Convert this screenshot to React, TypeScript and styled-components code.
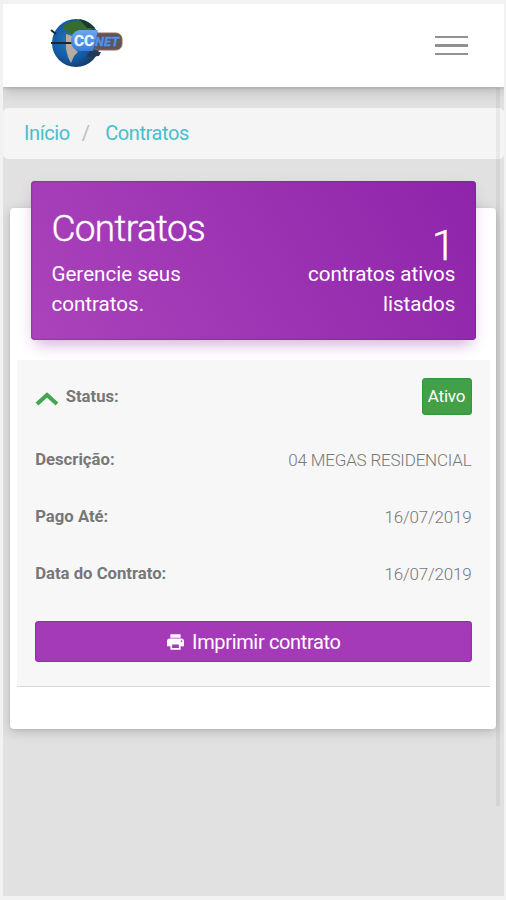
import React from "react";
import styled, { createGlobalStyle } from "styled-components";

const GlobalStyle = createGlobalStyle`
  * { box-sizing: border-box; }
  body { margin: 0; background: #f2f2f2; font-family: Roboto, "Liberation Sans", sans-serif; font-weight: 300; }
  h1, p { margin: 0; font-weight: inherit; }
`;

const Page = styled.div`
  height: 900px;
  padding: 4px 2px 4px 3px;
`;

const Screen = styled.main`
  position: relative;
  height: 892px;
  overflow: hidden;
  background: #e1e1e1;
`;

const Header = styled.header`
  position: relative;
  display: flex;
  align-items: center;
  justify-content: space-between;
  height: 83px;
  padding: 0 36px 0 45px;
  background: #fff;
  box-shadow: 0 3px 14px rgba(0, 0, 0, 0.22), 0 1px 3px rgba(0, 0, 0, 0.15);
`;

const Logo = styled.svg`
  width: 78px;
  height: 56px;
  margin-bottom: 4px;
`;

const MenuButton = styled.button`
  display: flex;
  flex-direction: column;
  gap: 6px;
  padding: 0;
  border: 0;
  background: none;
`;

const MenuLine = styled.span`
  width: 33px;
  height: 2.5px;
  background: #919191;
`;

const Breadcrumb = styled.nav`
  display: flex;
  align-items: center;
  height: 51px;
  margin-top: 21px;
  padding: 0 0 2px 21px;
  border-radius: 5px;
  background: #f5f5f5;
  color: #45bfce;
  font-size: 20px;
  font-weight: 400;
  letter-spacing: -0.4px;
`;

const Separator = styled.span`
  margin: 0 15.5px 0 12px;
  color: #bdbdbd;
`;

const Card = styled.section`
  height: 521px;
  margin: 49px 8px 0 7px;
  padding: 0 6px 0 7px;
  border-radius: 4px;
  background: #fff;
  box-shadow: 0 3px 12px rgba(0, 0, 0, 0.18), 0 1px 3px rgba(0, 0, 0, 0.08);
`;

const CardHeader = styled.header`
  position: relative;
  top: -27px;
  display: flex;
  justify-content: space-between;
  height: 159px;
  margin: 0 14px -7px 14.4px;
  padding: 0 20.5px 0 20px;
  border-radius: 4px;
  background: linear-gradient(60deg, #ab43bb, #8e24aa);
  box-shadow: inset 0 0 2px #8000a0, 0 5px 20px rgba(0, 0, 0, 0.04), 0 9px 14px -5px rgba(156, 39, 176, 0.35);
  color: #fff;
  font-size: 20.6px;
  font-weight: 400;
  line-height: 29.5px;
`;

const Intro = styled.div`
  width: 170px;
  padding-top: 25px;
`;

const Title = styled.h1`
  margin-bottom: 9px;
  font-size: 37px;
  font-weight: 300;
  line-height: 45px;
  letter-spacing: -0.65px;
  -webkit-text-stroke: 0.4px currentColor;
`;

const Summary = styled.div`
  width: 160px;
  padding-top: 47px;
  text-align: right;
`;

const Count = styled.p`
  height: 32px;
  font-size: 43px;
  font-weight: 300;
  line-height: 35px;
  -webkit-text-stroke: 0.4px currentColor;
`;

const Details = styled.div`
  height: 327px;
  padding: 7px 18.5px 0 18.2px;
  border-bottom: 1px solid #d8d8d8;
  background: #f7f7f7;
`;

const Row = styled.div`
  display: flex;
  align-items: center;
  justify-content: space-between;
  height: 57px;
  color: #777;
  font-size: 17px;
  letter-spacing: -0.2px;
`;

const StatusRow = styled(Row)`
  height: 58px;
  margin-bottom: 6px;
`;

const Label = styled.span`
  display: flex;
  align-items: center;
  font-size: 16.7px;
  font-weight: 700;
  letter-spacing: 0;
`;

const Chevron = styled.svg`
  width: 24px;
  height: 16px;
  margin: 4px 6.5px 0 0;
`;

const Badge = styled.span`
  width: 50px;
  height: 37px;
  border-radius: 4px;
  background: #43a047;
  box-shadow: inset 0 0 2px #008b10;
  color: #fff;
  font-size: 17px;
  font-weight: 400;
  line-height: 36px;
  text-align: center;
`;

const PrintButton = styled.button`
  display: flex;
  align-items: center;
  justify-content: center;
  gap: 8px;
  width: 100%;
  height: 41px;
  margin-top: 19px;
  padding: 0 0 0 1px;
  border: 0;
  border-radius: 4px;
  background: #a53ab9;
  box-shadow: inset 0 0 2px #8200a0;
  color: #fff;
  font: 400 20px Roboto, sans-serif;
  letter-spacing: -0.35px;
`;

const PrintIcon = styled.svg`
  width: 17px;
  height: 16px;
`;

const Scrollbar = styled.div`
  position: absolute;
  top: 84px;
  right: 4px;
  width: 4px;
  height: 718px;
  background: rgba(0, 0, 0, 0.05);
`;

const BrandLogo = () => (
  <Logo viewBox="48 15 78 56" role="img" aria-label="CCNET">
    <defs>
      <radialGradient id="ocean" cx="0.4" cy="0.45" r="0.6">
        <stop offset="0" stopColor="#287db2" />
        <stop offset="0.65" stopColor="#1259a6" />
        <stop offset="1" stopColor="#163b60" />
      </radialGradient>
      <linearGradient id="pill" x2="0" y2="1">
        <stop stopColor="#6aa6ee" />
        <stop offset="1" stopColor="#3c7cdc" />
      </linearGradient>
    </defs>
    <circle cx="76" cy="42" r="24" fill="url(#ocean)" />
    <path d="M64 24Q75 16 87 22L92 28 84 31 79 29 74 34 69 32 63 27Z" fill="#376b30" />
    <path d="M79 18Q88 19 95 27L87 27Z" fill="#183b2b" />
    <path d="M66 33L72 35 73 46 78 51 74 55 71 62 68 56 66 48Z" fill="#b8aca0" />
    <path d="M51 29L56 33M51 42H73" stroke="#142935" strokeWidth="2" />
    <path d="M90 50L101 51 99 55 86 56Z" fill="#26394f" />
    <rect x="92" y="32" width="30" height="17" rx="6" fill="#5d5558" stroke="#996755" strokeWidth="1" />
    <path d="M79 29H98L93 50H79Q71 48 71 40Q71 31 79 29Z" fill="url(#pill)" />
    <text x="74" y="45" fill="#e7f6ff" stroke="#e7f6ff" strokeWidth="0.3" fontFamily="Roboto" fontWeight="700" fontSize="14" textLength="20" lengthAdjust="spacingAndGlyphs">CC</text>
    <text x="95" y="45" fill="#4f91ed" stroke="#4f91ed" strokeWidth="0.3" fontFamily="Roboto" fontStyle="italic" fontWeight="700" fontSize="13" textLength="24" lengthAdjust="spacingAndGlyphs">NET</text>
  </Logo>
);

const details = [
  { label: "Descrição:", value: "04 MEGAS RESIDENCIAL" },
  { label: "Pago Até:", value: "16/07/2019" },
  { label: "Data do Contrato:", value: "16/07/2019" },
];

export default function App() {
  return (
    <Page>
      <GlobalStyle />
      <Screen>
        <Header>
          <BrandLogo />
          <MenuButton aria-label="Menu"><MenuLine /><MenuLine /><MenuLine /></MenuButton>
        </Header>
        <Breadcrumb><span>Início</span><Separator>/</Separator><span>Contratos</span></Breadcrumb>
        <Card>
          <CardHeader>
            <Intro>
              <Title>Contratos</Title>
              <p>Gerencie seus<br />contratos.</p>
            </Intro>
            <Summary>
              <Count>1</Count>
              <p>contratos ativos<br />listados</p>
            </Summary>
          </CardHeader>
          <Details>
            <StatusRow>
              <Label>
                <Chevron viewBox="0 0 24 16"><path d="M2 14L12 5L22 14" fill="none" stroke="#43a653" strokeWidth="4" /></Chevron>
                Status:
              </Label>
              <Badge>Ativo</Badge>
            </StatusRow>
            {details.map(({ label, value }) => (
              <Row key={label}><Label>{label}</Label><span>{value}</span></Row>
            ))}
            <PrintButton>
              <PrintIcon viewBox="2 3 20 18" fill="#fff"><path d="M19 8H5c-1.66 0-3 1.34-3 3v6h4v4h12v-4h4v-6c0-1.66-1.34-3-3-3zm-3 11H8v-4h8v4zm3-7c-.55 0-1-.45-1-1s.45-1 1-1 1 .45 1 1-.45 1-1 1zm-1-9H6v4h12V3z" /></PrintIcon>
              Imprimir contrato
            </PrintButton>
          </Details>
        </Card>
        <Scrollbar />
      </Screen>
    </Page>
  );
}
